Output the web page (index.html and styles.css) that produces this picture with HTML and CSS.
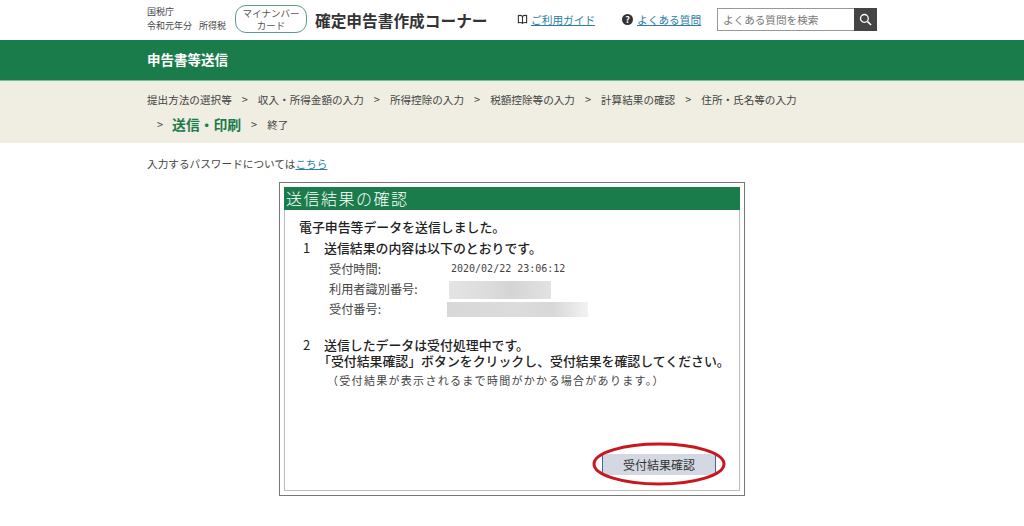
FILE: index.html
```html
<!DOCTYPE html>
<html lang="ja">
<head>
  <meta charset="UTF-8">
  <title>確定申告書作成コーナー</title>
  <link rel="stylesheet" href="styles.css">
</head>
<body>
  <header class="header">
    <div class="header__inner">
      <div class="agency"><div>国税庁</div><div class="agency__year"><span>令和元年分</span><span>所得税</span></div></div>
      <div class="mynumber">マイナンバー<br>カード</div>
      <div class="site-title">確定申告書作成コーナー</div>
      <a class="guide">
        <svg class="guide__icon" viewBox="0 0 12 12" width="11" height="11"><path d="M6 2.5C5 1.6 3 1.4 1.5 1.8v7.7C3 9.1 5 9.3 6 10.2c1-.9 3-1.1 4.5-.7V1.8C9 1.4 7 1.6 6 2.5zM6 2.5v7.7" fill="none" stroke="#333" stroke-width="1.2"/></svg>
        <span class="link">ご利用ガイド</span>
      </a>
      <a class="faq">
        <span class="faq__icon">?</span>
        <span class="link">よくある質問</span>
      </a>
      <div class="search">
        <div class="search__input">よくある質問を検索</div>
        <div class="search__btn">
          <svg viewBox="0 0 14 14" width="13" height="13"><circle cx="5.8" cy="5.8" r="4.2" fill="none" stroke="#fff" stroke-width="1.4"/><path d="M9 9l4 4" stroke="#fff" stroke-width="1.6"/></svg>
        </div>
      </div>
    </div>
  </header>

  <div class="page-band"><div class="page-band__title">申告書等送信</div></div>

  <nav class="steps">
    <div class="steps__row">
      <span>提出方法の選択等</span><i>&gt;</i>
      <span>収入・所得金額の入力</span><i>&gt;</i>
      <span>所得控除の入力</span><i>&gt;</i>
      <span>税額控除等の入力</span><i>&gt;</i>
      <span>計算結果の確認</span><i>&gt;</i>
      <span>住所・氏名等の入力</span>
    </div>
    <div class="steps__row steps__row--second">
      <i>&gt;</i><span class="steps__current">送信・印刷</span><i>&gt;</i><span>終了</span>
    </div>
  </nav>

  <main class="main">
    <p class="note">入力するパスワードについては<span class="link">こちら</span></p>

    <div class="dialog">
      <div class="dialog__frame">
        <div class="dialog__title">送信結果の確認</div>
        <div class="dialog__body">
          <p class="lead">電子申告等データを送信しました。</p>
          <div class="item">
            <span class="item__no">1</span>
            <span class="item__text">送信結果の内容は以下のとおりです。</span>
          </div>
          <dl class="result">
            <dt>受付時間:</dt><dd class="result__time">2020/02/22 23:06:12</dd>
            <dt>利用者識別番号:</dt><dd><div class="blur blur--short"></div></dd>
            <dt>受付番号:</dt><dd><div class="blur blur--long"></div></dd>
          </dl>
          <div class="item item--second">
            <span class="item__no">2</span>
            <span class="item__text">送信したデータは受付処理中です。<br><span class="bracket">「受付結果確認」ボタンをクリックし、受付結果を確認してください。</span></span>
          </div>
          <p class="sub">（受付結果が表示されるまで時間がかかる場合があります。）</p>
          <div class="actions">
            <div class="confirm">
              <button class="confirm__btn">受付結果確認</button>
              <svg class="confirm__ring" viewBox="0 0 134 44" width="134" height="44"><ellipse cx="67" cy="22" rx="65" ry="20" fill="none" stroke="#c8171f" stroke-width="3"/></svg>
            </div>
          </div>
        </div>
      </div>
    </div>
  </main>
</body>
</html>
```

FILE: styles.css
```css
* { box-sizing: border-box; }
html, body { margin: 0; padding: 0; }
body {
  font-family: "Noto Sans CJK JP", "Liberation Sans", sans-serif;
  color: #333;
  background: #fff;
  height: 526px;
  overflow: hidden;
}
.link {
  color: #2a7fa5;
  text-decoration: underline;
}

.header { height: 40px; }
.header__inner {
  display: flex;
  align-items: center;
  height: 38px;
  padding-left: 147px;
}
.agency {
  width: 88px;
  font-size: 9px;
  line-height: 14px;
  color: #444;
}
.agency__year {
  display: flex;
  gap: 7px;
  white-space: nowrap;
}
.mynumber {
  width: 72px;
  height: 28px;
  border: 1px solid #5f9c85;
  border-radius: 11px;
  font-size: 9.5px;
  line-height: 12px;
  text-align: center;
  padding-top: 1px;
  color: #555;
}
.site-title {
  margin: 2px 0 0 8px;
  width: 202px;
  font-size: 15.7px;
  font-weight: 700;
  color: #333;
  white-space: nowrap;
}
.guide {
  display: flex;
  align-items: center;
  gap: 3px;
  width: 105px;
  font-size: 10.7px;
}
.faq {
  display: flex;
  align-items: center;
  gap: 4px;
  width: 95px;
  font-size: 10.7px;
}
.faq__icon {
  width: 11px;
  height: 11px;
  border-radius: 50%;
  background: #333;
  color: #fff;
  font-size: 9px;
  line-height: 11px;
  font-weight: 700;
  text-align: center;
}
.search {
  display: flex;
  width: 160px;
  height: 23px;
}
.search__input {
  flex: 1;
  border: 1px solid #999;
  border-right: 0;
  font-size: 10.6px;
  line-height: 21px;
  padding-left: 5px;
  color: #777;
}
.search__btn {
  width: 23px;
  background: #444;
  display: flex;
  align-items: center;
  justify-content: center;
}

.page-band {
  height: 40px;
  background: #1a7b4b;
  display: flex;
  align-items: center;
  padding: 0 0 3px 147px;
}
.page-band__title {
  color: #fff;
  font-size: 13.5px;
  font-weight: 700;
}

.steps {
  height: 63px;
  background: #f0ede2;
  border-top: 1px solid #7fb89a;
  padding: 8px 0 0 147px;
  font-size: 10.6px;
  color: #444;
}
.steps__row {
  display: flex;
  align-items: center;
  height: 20px;
}
.steps__row i {
  font-style: normal;
  margin: 0 10px;
  font-size: 11px;
}
.steps__row--second {
  margin-top: 3px;
  height: 24px;
}
.steps__current {
  color: #1a7b4b;
  font-size: 13.8px;
  font-weight: 700;
}
.steps__row--second i:first-child { margin-right: 9px; }

.main { padding: 13px 0 0; }
.note {
  margin: 0 0 10px 147px;
  font-size: 10.65px;
  line-height: 16px;
  color: #444;
}
.dialog {
  width: 466px;
  height: 314px;
  margin-left: 279px;
  border: 1px solid #777;
  padding: 4px;
}
.dialog__frame {
  height: 100%;
  border: 1px solid #bbb;
  border-top: 0;
}
.dialog__title {
  height: 23px;
  margin: 0 -1px;
  background: #1a7b4b;
  color: #fff;
  font-size: 16px;
  font-weight: 300;
  line-height: 22px;
  letter-spacing: 1.5px;
  padding-left: 2px;
}
.dialog__body {
  padding: 8px 0 0 14px;
  color: #222;
}
.lead {
  margin: 0;
  font-size: 12.9px;
  line-height: 17px;
  font-weight: 500;
}
.item {
  display: flex;
  margin-top: 5px;
  font-size: 12.9px;
  line-height: 16px;
  font-weight: 500;
}
.item__no {
  width: 25px;
  padding-left: 4px;
  font-weight: 400;
}
.item__text { white-space: nowrap; }
.item--second { margin-top: 18px; }
.bracket { margin-left: -6px; }
.result {
  display: grid;
  grid-template-columns: 122px 1fr;
  grid-auto-rows: 20px;
  margin: 3px 0 0 30px;
  font-size: 12.2px;
  line-height: 20px;
  color: #444;
}
.result dt, .result dd { margin: 0; }
.result__time { font-size: 10px; font-family: "DejaVu Sans Mono", monospace; }
.blur { height: 18px; margin-top: 2px; }
.blur--short {
  width: 102px;
  margin-left: -2px;
  background: linear-gradient(90deg, #e4e4e4, #dcdcdc 40%, #d4d4d4 60%, #e2e2e2);
}
.blur--long {
  width: 141px;
  margin: 3px 0 0 -4px;
  height: 15px;
  background: linear-gradient(90deg, #d8d8d8, #dcdcdc 50%, #d8d8d8 75%, #f2f2f2);
}
.sub {
  margin: 4px 0 0 28px;
  font-size: 11px;
  line-height: 15px;
  color: #444;
  letter-spacing: 1.3px;
  white-space: nowrap;
}
.actions {
  display: flex;
  justify-content: flex-end;
  margin-top: 54px;
  padding-right: 13px;
}
.confirm {
  position: relative;
  width: 134px;
  height: 44px;
  display: flex;
  align-items: center;
  justify-content: center;
}
.confirm__btn {
  width: 114px;
  height: 21px;
  border: 0;
  border-left: 1px solid #44689a;
  border-right: 1px solid #44689a;
  background: #d3d8e3;
  font-family: inherit;
  font-size: 12px;
  color: #333;
  padding: 0;
}
.confirm__ring {
  position: absolute;
  left: 0;
  top: 0;
}
```
